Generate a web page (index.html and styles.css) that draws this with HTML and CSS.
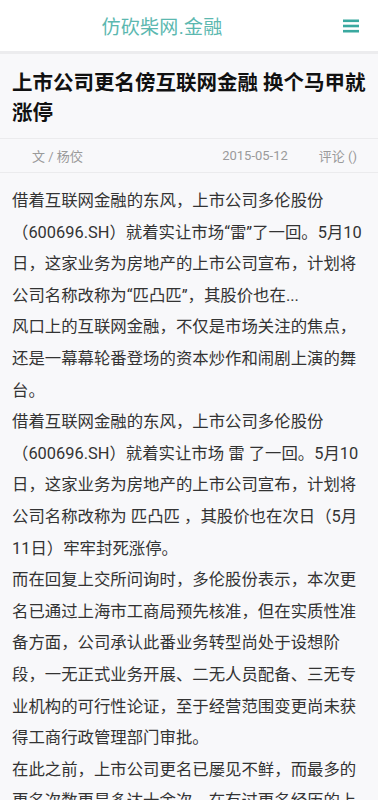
FILE: index.html
```html
<!DOCTYPE html>
<html lang="zh-CN">
<head>
    <meta charset="UTF-8">
    <meta name="viewport" content="width=device-width, initial-scale=1.0">
    <title>上市公司更名傍互联网金融 换个马甲就涨停</title>
    <link rel="stylesheet" href="styles.css">
</head>
<body>
    <div class="header">
        <div class="logo">仿砍柴网.金融</div>
        <div class="menu-btn">
            <svg width="16" height="14" viewBox="0 0 16 14">
                <rect x="0" y="0.5" width="16" height="2.6" fill="#3aa9a0"/>
                <rect x="0" y="5.7" width="16" height="2.6" fill="#3aa9a0"/>
                <rect x="0" y="10.9" width="16" height="2.6" fill="#3aa9a0"/>
            </svg>
        </div>
    </div>

    <div class="article">
        <h1 class="title">上市公司更名傍互联网金融 换个马甲就涨停</h1>

        <div class="meta">
            <span class="author">文 / 杨佼</span>
            <span class="date">2015-05-12</span>
            <span class="comments">评论 ()</span>
        </div>

        <div class="content">
            <p>借着互联网金融的东风，上市公司多伦股份（600696.SH）就着实让市场“雷”了一回。5月10日，这家业务为房地产的上市公司宣布，计划将公司名称改称为“匹凸匹”，其股价也在...</p>
            <p>风口上的互联网金融，不仅是市场关注的焦点，还是一幕幕轮番登场的资本炒作和闹剧上演的舞台。</p>
            <p>借着互联网金融的东风，上市公司多伦股份（600696.SH）就着实让市场 雷 了一回。5月10日，这家业务为房地产的上市公司宣布，计划将公司名称改称为 匹凸匹 ，其股价也在次日（5月11日）牢牢封死涨停。</p>
            <p>而在回复上交所问询时，多伦股份表示，本次更名已通过上海市工商局预先核准，但在实质性准备方面，公司承认此番业务转型尚处于设想阶段，一无正式业务开展、二无人员配备、三无专业机构的可行性论证，至于经营范围变更尚未获得工商行政管理部门审批。</p>
            <p>在此之前，上市公司更名已屡见不鲜，而最多的更名次数更是多达十余次，在有过更名经历的上市公司中，不乏借更名之机炒作股价的案例。</p>
        </div>
    </div>
</body>
</html>
```

FILE: styles.css
```css
body {
    margin: 0;
    padding: 0;
    background-color: #f8f8fa;
    font-family: Roboto, "Noto Sans CJK SC", sans-serif;
    color: #333;
}
.header {
    display: flex;
    align-items: center;
    height: 51px;
    background-color: #fff;
    border-bottom: 3px solid #ececee;
}
.logo {
    flex: 1;
    text-align: center;
    font-size: 19px;
    color: #5cb8b0;
    letter-spacing: 0.3px;
}
.menu-btn {
    width: 54px;
    display: flex;
    justify-content: center;
    padding-top: 1px;
}
.article {
    padding: 0 12px;
}
.title {
    margin: 0;
    padding: 14px 0 10px;
    font-size: 20.5px;
    line-height: 30px;
    font-weight: bold;
    color: #111;
}
.meta {
    display: flex;
    align-items: center;
    height: 33px;
    border-top: 1px solid #ebebed;
    border-bottom: 1px solid #ebebed;
    margin: 0 -12px;
    padding: 0 21px 0 32px;
    font-size: 13px;
    color: #9a9a9a;
}
.author {
    flex: 1;
}
.comments {
    margin-left: 31px;
}
.content {
    padding-top: 12px;
}
.content p {
    margin: 0;
    font-size: 16.4px;
    line-height: 31.6px;
    color: #333;
}
```
